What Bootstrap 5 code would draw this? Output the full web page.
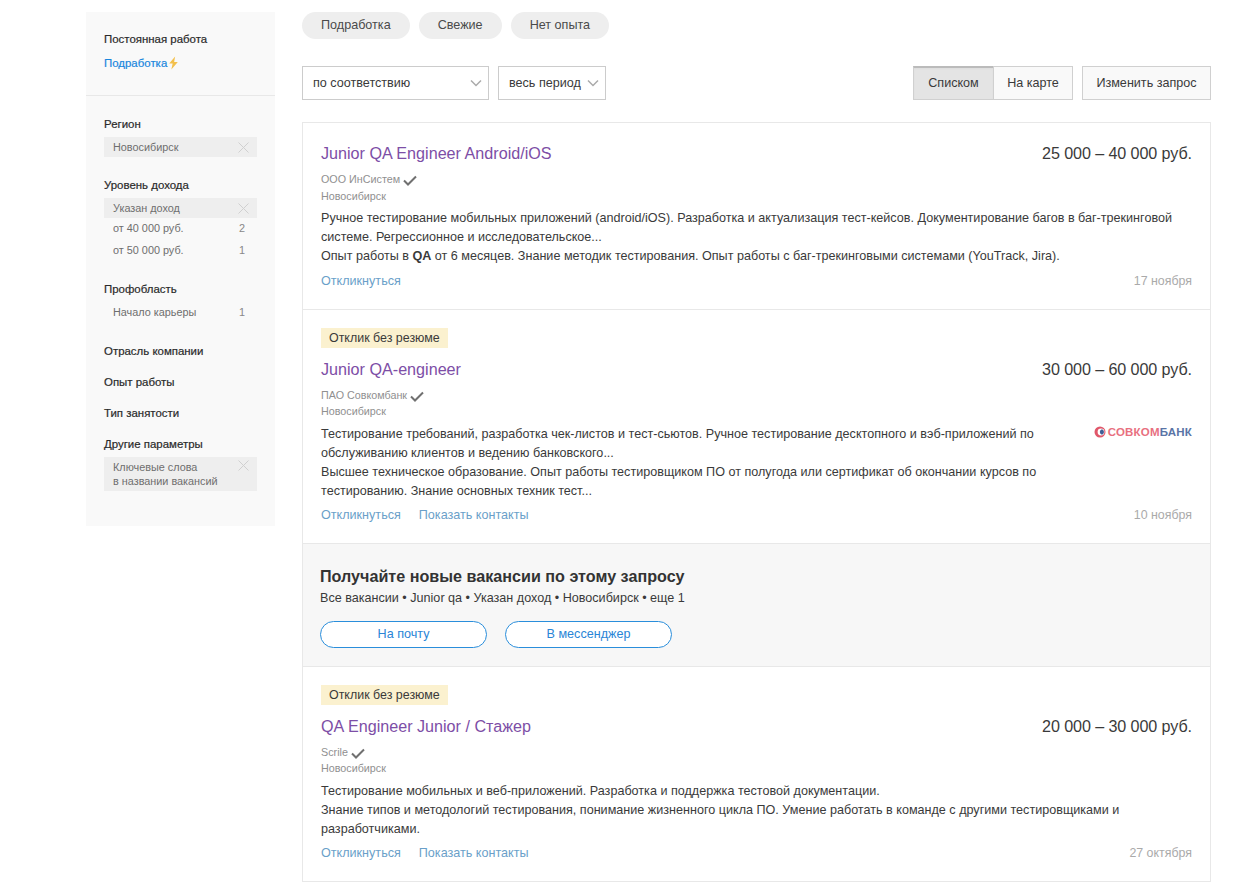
<!DOCTYPE html>
<html lang="ru"><head><meta charset="utf-8"><title>Вакансии</title>
<link href="https://cdn.jsdelivr.net/npm/bootstrap@5.3.0/dist/css/bootstrap.min.css" rel="stylesheet">
<style>
body{font-family:"Liberation Sans",Arial,sans-serif;font-size:12.6px;color:#3a3a3a;background:#fff;overflow:hidden}
.pagewrap{width:1125px;margin-left:86px;gap:27px;padding-top:12px}
.sidebar{width:189px;height:514px;background:#f9f9f9;flex:none}
.side-top{height:84px;padding:20px 18px 0;border-bottom:1px solid #e8e8e8}
.side-h{font-size:11.45px;font-weight:400;line-height:14px;color:#2a2a2a;-webkit-text-stroke:.2px #2a2a2a;margin:0}
.side-link{color:#1a87dd;font-size:11.45px;line-height:14px;margin-top:10px;display:flex;align-items:center;gap:1px;-webkit-text-stroke:.2px #1a87dd}
.side-body{padding:21px 18px 0}
.fgroup{margin-bottom:21px}
.fgroup.tight{margin-bottom:17px}
.fgroup.income{margin-bottom:21px}
.fgroup.prof{margin-bottom:22px}
.fitem{height:20px;font-size:10.85px;color:#6e6e6e;padding:0 9px;display:flex;align-items:center;justify-content:space-between;width:153px}
.fitem.on{background:#eee;margin-top:6px}
.fitem .num{color:#888;padding-right:3px}
.fitem.two{height:34px;align-items:flex-start;line-height:14px;padding-top:3px}
.xicon{flex:none;margin-right:-1px}
.mainc{width:909px}
.chip{height:27px;border-radius:14px;background:#eee;font-size:12.6px;color:#4a4a4a;padding:0 19px;display:flex;align-items:center}
.toolbar{margin-top:27px;height:34px;margin-bottom:22px}
.selbox{height:34px;border:1px solid #ccc;font-size:12.6px;color:#3a3a3a;display:flex;align-items:center;justify-content:space-between;padding:0 6px 0 10px;background:#fff}
.tbtn{height:34px;border:1px solid #d0d0d0;background:#f9f9f9;font-size:12.6px;color:#3a3a3a;display:flex;align-items:center;justify-content:center}
.tbtn.act{background:#e4e4e4;border-top:2px solid #bbb;border-right:0;box-shadow:inset 0 1px 2px #ddd}
.reslist{border:1px solid #e8e8e8}
.vac{padding:0 18px;border-bottom:1px solid #e8e8e8}
.vac:last-child{border-bottom:0}
.vtitle{font-size:16.15px;line-height:20px;color:#7d4ea6}
.vsal{font-size:16.15px;letter-spacing:-.1px;line-height:20px;color:#3a3a3a}
.vmeta{font-size:10.75px;line-height:16px;color:#909090}
.vdesc{font-size:12.6px;line-height:19px;color:#3a3a3a;margin:0}
.vlink{font-size:12.6px;line-height:16px;color:#6a9fc9;text-decoration:none}
.vdate{font-size:12.4px;line-height:16px;color:#aaa}
.tagy{display:inline-block;background:#fbf1cf;height:20px;line-height:20px;padding:0 8px;font-size:12.45px;color:#3a3a3a}
.subs{background:#f7f7f7;padding:23px 17px 18px;border-bottom:1px solid #e8e8e8}
.subs-h{font-size:16.15px;line-height:18px;font-weight:700;color:#333;margin:0}
.subs-p{font-size:12.6px;line-height:16px;color:#3a3a3a;margin:5px 0 15px}
.pillb{width:167px;height:27px;border:1px solid #2a8edb;border-radius:14px;background:#fff;color:#2a85d6;font-size:12.6px;padding:0}
.logo-text{font-size:11.5px;font-weight:700;letter-spacing:.2px;color:#e8707f;line-height:12px}
.logo-text b{color:#5a74a6}
</style></head><body>
<div class="d-flex pagewrap">
<aside class="sidebar">
 <div class="side-top"><div class="side-h">Постоянная работа</div>
 <div class="side-link">Подработка<svg width="11" height="14" viewBox="0 0 10 13"><path d="M6.5 0.5 1 7h3.2L3 12.5 9 5.6H5.6z" fill="#f3c04c"/></svg></div></div>
 <div class="side-body">
  <div class="fgroup"><div class="side-h">Регион</div>
   <div class="fitem on"><span>Новосибирск</span><svg class="xicon" width="11" height="11" viewBox="0 0 11 11"><path d="M.5.5l10 10M10.5.5l-10 10" stroke="#d0d0d0" fill="none"/></svg></div></div>
  <div class="fgroup income"><div class="side-h">Уровень дохода</div>
   <div class="fitem on"><span>Указан доход</span><svg class="xicon" width="11" height="11" viewBox="0 0 11 11"><path d="M.5.5l10 10M10.5.5l-10 10" stroke="#d0d0d0" fill="none"/></svg></div>
   <div class="fitem" style="height:21px"><span>от 40 000 руб.</span><span class="num">2</span></div>
   <div class="fitem" style="height:22px"><span>от 50 000 руб.</span><span class="num">1</span></div></div>
  <div class="fgroup prof"><div class="side-h">Профобласть</div>
   <div class="fitem" style="margin-top:6px"><span>Начало карьеры</span><span class="num">1</span></div></div>
  <div class="fgroup tight"><div class="side-h">Отрасль компании</div></div>
  <div class="fgroup tight"><div class="side-h">Опыт работы</div></div>
  <div class="fgroup tight"><div class="side-h">Тип занятости</div></div>
  <div class="fgroup"><div class="side-h">Другие параметры</div>
   <div class="fitem on two"><span>Ключевые слова<br>в названии вакансий</span><svg class="xicon" width="11" height="11" viewBox="0 0 11 11"><path d="M.5.5l10 10M10.5.5l-10 10" stroke="#d0d0d0" fill="none"/></svg></div></div>
 </div>
</aside>
<main class="mainc">
 <div class="d-flex" style="gap:9px"><div class="chip">Подработка</div><div class="chip">Свежие</div><div class="chip">Нет опыта</div></div>
 <div class="d-flex toolbar">
  <div class="selbox" style="width:187px"><span>по соответствию</span><svg width="12" height="8" viewBox="0 0 12 8"><path d="M1 1.5l5 5 5-5" stroke="#aaa" stroke-width="1.5" fill="none"/></svg></div>
  <div class="selbox" style="width:108px;margin-left:9px"><span>весь период</span><svg width="12" height="8" viewBox="0 0 12 8"><path d="M1 1.5l5 5 5-5" stroke="#aaa" stroke-width="1.5" fill="none"/></svg></div>
  <div class="d-flex ms-auto"><div class="tbtn act" style="width:80px">Списком</div><div class="tbtn" style="width:80px">На карте</div></div>
  <div class="tbtn" style="width:129px;margin-left:9px">Изменить запрос</div>
 </div>
 <div class="reslist">
  <section class="vac" style="height:187px;padding-top:20px">
   <div class="d-flex justify-content-between"><span class="vtitle">Junior QA Engineer Android/iOS</span><span class="vsal">25 000 – 40 000 руб.</span></div>
   <div class="vmeta" style="margin-top:8px">ООО ИнСистем <svg width="14" height="11" viewBox="0 0 14 11"><path d="M1 5.5l4 4 8-8" stroke="#707070" stroke-width="2" fill="none"/></svg></div>
   <div class="vmeta" style="margin-top:1px">Новосибирск</div>
   <p class="vdesc" style="margin-top:5px">Ручное тестирование мобильных приложений (android/iOS). Разработка и актуализация тест-кейсов. Документирование багов в баг-трекинговой системе. Регрессионное и исследовательское...<br>Опыт работы в <b>QA</b> от 6 месяцев. Знание методик тестирования. Опыт работы с баг-трекинговыми системами (YouTrack, Jira).</p>
   <div class="d-flex justify-content-between" style="margin-top:7px"><a class="vlink" href="#">Откликнуться</a><span class="vdate">17 ноября</span></div>
  </section>
  <section class="vac" style="height:234px;padding-top:18px">
   <span class="tagy">Отклик без резюме</span>
   <div class="d-flex justify-content-between" style="margin-top:11px"><span class="vtitle">Junior QA-engineer</span><span class="vsal">30 000 – 60 000 руб.</span></div>
   <div class="vmeta" style="margin-top:8px">ПАО Совкомбанк <svg width="14" height="11" viewBox="0 0 14 11"><path d="M1 5.5l4 4 8-8" stroke="#707070" stroke-width="2" fill="none"/></svg></div>
   <div class="vmeta">Новосибирск</div>
   <div class="d-flex justify-content-between" style="margin-top:6px">
    <p class="vdesc" style="width:730px">Тестирование требований, разработка чек-листов и тест-сьютов. Ручное тестирование десктопного и вэб-приложений по обслуживанию клиентов и ведению банковского...<br>Высшее техническое образование. Опыт работы тестировщиком ПО от полугода или сертификат об окончании курсов по тестированию. Знание основных техник тест...</p>
    <div class="d-flex align-items-center align-self-start" style="gap:2px;margin-top:1px"><svg width="12" height="12" viewBox="0 0 12 12"><circle cx="6" cy="6" r="5.5" fill="#e0576a"/><circle cx="7" cy="6" r="3.4" fill="#fff"/><path d="M8 3.2a2.9 2.9 0 0 0 0 5.6 3.4 3.4 0 0 0 2-2.8 3.4 3.4 0 0 0-2-2.8z" fill="#3f5f98"/></svg><span class="logo-text">СОВКОМ<b>БАНК</b></span></div>
   </div>
   <div class="d-flex justify-content-between" style="margin-top:6px"><div class="d-flex" style="gap:18px"><a class="vlink" href="#">Откликнуться</a><a class="vlink" href="#">Показать контакты</a></div><span class="vdate">10 ноября</span></div>
  </section>
  <section class="subs">
   <h2 class="subs-h">Получайте новые вакансии по этому запросу</h2>
   <p class="subs-p">Все вакансии • Junior qa • Указан доход • Новосибирск • еще 1</p>
   <div class="d-flex" style="gap:18px"><button class="pillb">На почту</button><button class="pillb">В мессенджер</button></div>
  </section>
  <section class="vac" style="height:214px;padding-top:18px">
   <span class="tagy">Отклик без резюме</span>
   <div class="d-flex justify-content-between" style="margin-top:11px"><span class="vtitle">QA Engineer Junior / Стажер</span><span class="vsal">20 000 – 30 000 руб.</span></div>
   <div class="vmeta" style="margin-top:8px">Scrile <svg width="14" height="11" viewBox="0 0 14 11"><path d="M1 5.5l4 4 8-8" stroke="#707070" stroke-width="2" fill="none"/></svg></div>
   <div class="vmeta">Новосибирск</div>
   <p class="vdesc" style="margin-top:6px">Тестирование мобильных и веб-приложений. Разработка и поддержка тестовой документации.<br>Знание типов и методологий тестирования, понимание жизненного цикла ПО. Умение работать в команде с другими тестировщиками и разработчиками.</p>
   <div class="d-flex justify-content-between" style="margin-top:6px"><div class="d-flex" style="gap:18px"><a class="vlink" href="#">Откликнуться</a><a class="vlink" href="#">Показать контакты</a></div><span class="vdate">27 октября</span></div>
  </section>
 </div>
</main>
</div>
<script src="https://cdn.jsdelivr.net/npm/bootstrap@5.3.0/dist/js/bootstrap.bundle.min.js"></script>
</body></html>
